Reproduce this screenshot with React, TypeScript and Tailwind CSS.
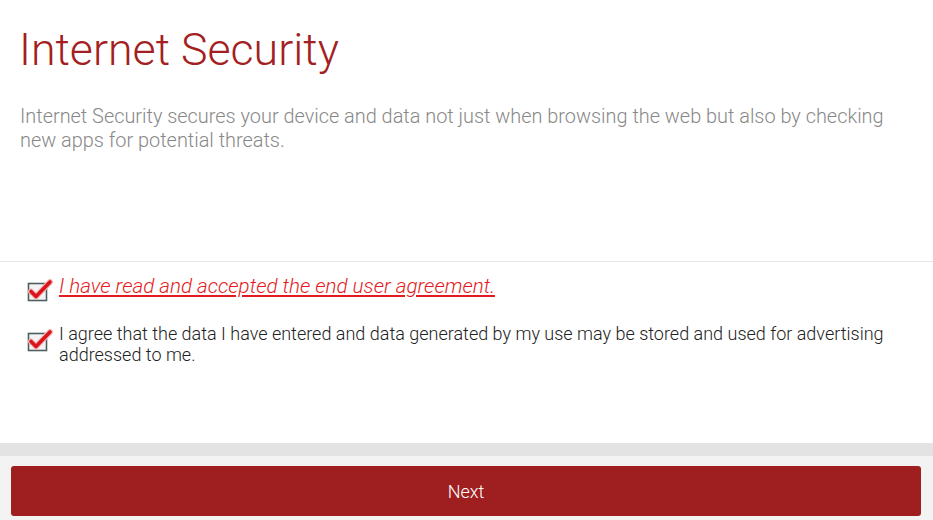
import React from "react";

const CheckIcon = () => (
  <svg width="26" height="24" viewBox="0 0 26 24" className="shrink-0">
    <rect x="1.5" y="5.5" width="18" height="17" fill="#f4f4f4" stroke="#4f5f5f" strokeWidth="1.6" />
    <path d="M4 13.5 L9 18.5 L23 4" fill="none" stroke="#f3b8b8" strokeWidth="6" strokeLinecap="round" strokeLinejoin="round" />
    <path d="M4 13.5 L9 18.5 L23 4" fill="none" stroke="#d9141b" strokeWidth="3.6" strokeLinecap="round" strokeLinejoin="round" />
  </svg>
);

export default function App() {
  return (
    <div className="flex h-[520px] w-[933px] flex-col bg-white font-['Roboto',sans-serif]">
      <div className="px-5 pt-[22px]">
        <h1 className="-ml-px text-[44.7px] font-light leading-[56px] text-[#a31f22]">Internet Security</h1>
        <p className="mt-[27px] text-[19.9px] font-light leading-[24px] text-[#888]">
          Internet Security secures your device and data not just when browsing the web but also by checking new apps
          for potential threats.
        </p>
      </div>
      <div className="mt-[108px] border-t border-[#e6e6e6] pl-[27px] pr-5 pt-[12px]">
        <div className="flex items-start gap-[6px]">
          <div className="mt-[4px]">
            <CheckIcon />
          </div>
          <a className="cursor-pointer text-[20.6px] font-light italic leading-[24px] text-[#e41a22] underline">
            I have read and accepted the end user agreement.
          </a>
        </div>
        <div className="mt-[21px] flex items-start gap-[6px]">
          <div className="mt-[5px]">
            <CheckIcon />
          </div>
          <p className="text-[18px] font-light leading-[21px] text-[#222]">
            I agree that the data I have entered and data generated by my use may be stored and used for advertising
            addressed to me.
          </p>
        </div>
      </div>
      <div className="flex-1" />
      <div className="h-[13px] bg-[#e3e3e3]" />
      <div className="bg-[#f3f3f3] pb-[4px] pl-[11px] pr-[12px] pt-[10px]">
        <button className="flex h-[50px] w-full items-center justify-center rounded-[3px] bg-[#9f1f21] text-[18px] font-light text-white">
          Next
        </button>
      </div>
    </div>
  );
}
